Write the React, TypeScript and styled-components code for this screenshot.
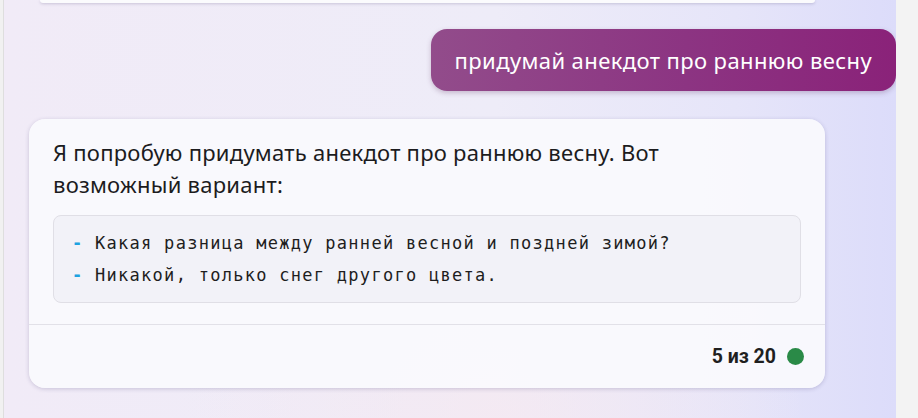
import React from "react";
import styled, { createGlobalStyle } from "styled-components";

const Global = createGlobalStyle`
  html, body { margin: 0; padding: 0; height: 100%; overflow: hidden; }
  body { font-family: "Noto Sans", "Open Sans", sans-serif; background: #f3f3f3; }
  #root { height: 100%; }
`;

const Page = styled.div`
  display: flex;
  height: 418px;
  width: 918px;
`;

const LeftStrip = styled.div`
  width: 3px;
  background: #f1f1f1;
  border-right: 1px solid #dedede;
`;

const RightStrip = styled.div`
  width: 22px;
  background: #f3f3f3;
`;

const Main = styled.div`
  flex: 1;
  display: flex;
  flex-direction: column;
  background:
    radial-gradient(ellipse at 55% 100%, rgba(246, 232, 240, 0.7), rgba(246, 232, 240, 0) 45%),
    linear-gradient(90deg, #f1ebf7 0%, #eeecf8 55%, #e6e5f9 82%, #dcdcfa 100%);
  overflow: hidden;
`;

const PrevCard = styled.div`
  height: 3px;
  margin: 0 81px 0 36px;
  background: #fbfbfd;
  border-radius: 0 0 14px 14px;
  box-shadow: 0 1px 3px rgba(60, 50, 100, 0.22);
`;

const UserRow = styled.div`
  display: flex;
  justify-content: flex-end;
  margin-top: 26px;
`;

const Bubble = styled.div`
  padding: 16px 24px;
  line-height: 30px;
  font-size: 22px;
  letter-spacing: 0.4px;
  color: #ffffff;
  border-radius: 16px;
  background: linear-gradient(90deg, #924c8b 0%, #8c3482 55%, #8a2279 100%);
  box-shadow: 0 2px 5px rgba(80, 30, 80, 0.25);
`;

const ReplyCard = styled.div`
  margin: 28px 71px 0 25px;
  background: rgba(250, 250, 253, 0.93);
  border-radius: 16px;
  box-shadow: 0 1px 4px rgba(60, 50, 110, 0.22);
  display: flex;
  flex-direction: column;
`;

const ReplyBody = styled.div`
  padding: 17px 24px 21px;
`;

const Paragraph = styled.p`
  margin: 0;
  font-size: 22px;
  line-height: 32px;
  letter-spacing: 0.25px;
  color: #1c1c1e;
`;

const CodeBlock = styled.div`
  margin-top: 15px;
  padding: 11px 18px;
  border: 1px solid #e0dfe6;
  border-radius: 8px;
  background: rgba(240, 240, 245, 0.7);
`;

const CodeLine = styled.div`
  font-family: "DejaVu Sans Mono", "Liberation Mono", monospace;
  font-size: 17px;
  line-height: 32px;
  letter-spacing: 1.28px;
  color: #1e1e1e;
  white-space: pre;
`;

const Dash = styled.span`
  color: #1fa2e0;
  font-weight: 700;
`;

const Footer = styled.div`
  height: 63px;
  border-top: 1px solid #e2e1e8;
  display: flex;
  align-items: center;
  justify-content: flex-end;
  gap: 11px;
  padding: 0 21px;
`;

const Counter = styled.span`
  font-family: "Roboto", "Noto Sans", sans-serif;
  font-weight: 700;
  font-size: 19.5px;
  color: #1f1f1f;
  letter-spacing: 0px;
`;

const Dot = styled.span`
  width: 17px;
  height: 17px;
  border-radius: 50%;
  background: #2a8a47;
`;

export default function App() {
  return (
    <>
      <Global />
      <Page>
        <LeftStrip />
        <Main>
          <PrevCard />
          <UserRow>
            <Bubble>придумай анекдот про раннюю весну</Bubble>
          </UserRow>
          <ReplyCard>
            <ReplyBody>
              <Paragraph>
                Я попробую придумать анекдот про раннюю весну. Вот
                <br />
                возможный вариант:
              </Paragraph>
              <CodeBlock>
                <CodeLine>
                  <Dash>-</Dash> Какая разница между ранней весной и поздней зимой?
                </CodeLine>
                <CodeLine>
                  <Dash>-</Dash> Никакой, только снег другого цвета.
                </CodeLine>
              </CodeBlock>
            </ReplyBody>
            <Footer>
              <Counter>5 из 20</Counter>
              <Dot />
            </Footer>
          </ReplyCard>
        </Main>
        <RightStrip />
      </Page>
    </>
  );
}
